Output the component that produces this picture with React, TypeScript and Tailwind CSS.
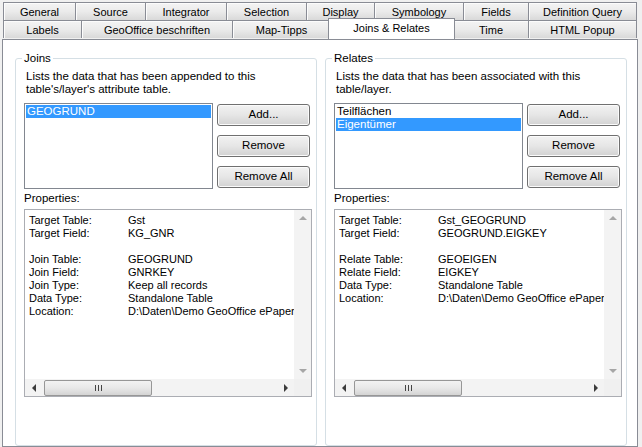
import React from "react";

const rowOne = [
  { label: "General", w: "w-[72px]" },
  { label: "Source", w: "w-[70px]" },
  { label: "Integrator", w: "w-[81px]" },
  { label: "Selection", w: "w-[80px]" },
  { label: "Display", w: "w-[68px]" },
  { label: "Symbology", w: "w-[89px]" },
  { label: "Fields", w: "w-[65px]" },
  { label: "Definition Query", w: "w-[109px]" },
];

const rowTwo = [
  { label: "Labels", w: "w-[78px]" },
  { label: "GeoOffice beschriften", w: "w-[151px]" },
  { label: "Map-Tipps", w: "w-[98px]" },
  { label: "Joins & Relates", w: "w-[127px]", active: true },
  { label: "Time", w: "w-[75px]" },
  { label: "HTML Popup", w: "w-[109px]" },
];

const ui = "font-['Liberation_Sans',Arial,sans-serif]";

function Tab({ label, w, active, last }: { label: string; w: string; active?: boolean; last?: boolean }) {
  if (active) {
    return (
      <div
        className={`${w} relative z-10 -mx-[2px] -mt-[2px] h-[21px] border-x border-t border-[#898c95] bg-white pt-[2px] text-center text-[11px] leading-[14px]`}
      >
        {label}
      </div>
    );
  }
  return (
    <div
      className={`${w} h-[18px] border-l border-t border-[#898c95] ${last ? "border-r" : ""} bg-linear-to-b from-[#f4f4f4] via-[#ebebeb] to-[#d9d9d9] pt-[2px] text-center text-[11px] leading-[14px] shadow-[inset_1px_1px_0_#fcfcfc]`}
    >
      {label}
    </div>
  );
}

function Button({ children }: { children: React.ReactNode }) {
  return (
    <div className="flex h-[22px] items-center justify-center rounded-[3px] border border-[#707070] bg-linear-to-b from-[#f2f2f2] via-[#e6e6e6] to-[#d2d2d2] text-[11.5px] shadow-[inset_0_0_0_1px_#fbfbfb]">
      {children}
    </div>
  );
}

function Arrow({ dir, dark }: { dir: "up" | "down" | "left" | "right"; dark?: boolean }) {
  const pts = {
    up: "0,4 4,0 8,4",
    down: "0,0 8,0 4,4",
    left: "4,0 4,8 0,4",
    right: "0,0 4,4 0,8",
  }[dir];
  const vertical = dir === "up" || dir === "down";
  return (
    <svg width={vertical ? 8 : 4} height={vertical ? 4 : 8} viewBox={vertical ? "0 0 8 4" : "0 0 4 8"}>
      <polygon points={pts} fill={dark ? "#3c3c3c" : "#a6a6a6"} />
    </svg>
  );
}

function Properties({ rows }: { rows: [string, string][] }) {
  return (
    <div className="flex h-[188px] w-[288px] flex-col border border-[#abadb3] bg-white">
      <div className="flex flex-1 overflow-hidden">
        <div className="flex-1 overflow-hidden whitespace-nowrap pl-[4px] pt-[4px] text-[11px] leading-[13px]">
          {rows.map(([k, v], i) => (
            <div key={i} className="flex h-[13px]">
              <span className="w-[99px] shrink-0">{k}</span>
              <span>{v}</span>
            </div>
          ))}
        </div>
        <div className="flex w-[17px] flex-col items-center justify-between bg-[#f3f3f3] py-[6px]">
          <Arrow dir="up" />
          <Arrow dir="down" />
        </div>
      </div>
      <div className="flex h-[17px]">
        <div className="flex flex-1 items-center bg-[#f3f3f3]">
          <div className="flex w-[17px] justify-center">
            <Arrow dir="left" dark />
          </div>
          <div className="ml-[2px] flex h-[16px] w-[108px] items-center justify-center gap-[2px] rounded-[2px] border border-[#979797] bg-linear-to-b from-[#f3f3f3] via-[#e8e8e8] to-[#d4d4d4]">
            <span className="h-[6px] w-px bg-[#444]" />
            <span className="h-[6px] w-px bg-[#444]" />
            <span className="h-[6px] w-px bg-[#444]" />
          </div>
          <div className="flex-1" />
          <div className="flex w-[17px] justify-center">
            <Arrow dir="right" dark />
          </div>
        </div>
        <div className="w-[17px] bg-[#f0f0f0]" />
      </div>
    </div>
  );
}

function Group({
  title,
  desc,
  items,
  selected,
  rows,
}: {
  title: string;
  desc: string[];
  items: string[];
  selected: number;
  rows: [string, string][];
}) {
  return (
    <div className="relative mt-[18px] w-[302px] rounded-[3px] border border-[#d5dfe5] pb-[9px] pl-[8px] pr-[4px] pt-[11px]">
      <span className="absolute -top-[8px] left-[6px] bg-white px-[2px] text-[11.5px] leading-[14px]">{title}</span>
      <div className="pl-[2px] text-[11.5px] leading-[13px]">
        {desc.map((d) => (
          <div key={d}>{d}</div>
        ))}
      </div>
      <div className="mt-[7px] flex h-[86px] gap-[4px]">
        <div className="w-[189px] border border-[#828790] bg-white p-[1px] text-[11.5px] leading-[13px]">
          {items.map((it, i) => (
            <div key={it} className={`h-[13px] pl-[1px] ${i === selected ? "bg-[#3399ff] text-white" : ""}`}>
              {it}
            </div>
          ))}
        </div>
        <div className="flex w-[93px] flex-col gap-[9px] pt-[1px]">
          <Button>Add...</Button>
          <Button>Remove</Button>
          <Button>Remove All</Button>
        </div>
      </div>
      <div className="mt-[2px] h-[14px] text-[11.5px] leading-[14px]">Properties:</div>
      <div className="mt-[4px]">
        <Properties rows={rows} />
      </div>
    </div>
  );
}

export default function App() {
  return (
    <div className={`${ui} h-[447px] w-[642px] overflow-hidden bg-[#f0f0f0] pt-[2px] text-black`}>
      <div className="relative z-10 ml-[3px] flex">
        {rowOne.map((t, i) => (
          <Tab key={t.label} label={t.label} w={t.w} last={i === rowOne.length - 1} />
        ))}
      </div>
      <div className="relative z-10 ml-[3px] flex">
        {rowTwo.map((t, i) => (
          <Tab key={t.label} label={t.label} w={t.w} active={t.active} last={i === rowTwo.length - 1} />
        ))}
      </div>
      <div className="ml-[2px] flex h-[408px] w-[636px] gap-[8px] border border-[#898c95] bg-white pl-[12px]">
        <Group
          title="Joins"
          desc={["Lists the data that has been appended to this", "table's/layer's attribute table."]}
          items={["GEOGRUND"]}
          selected={0}
          rows={[
            ["Target Table:", "Gst"],
            ["Target Field:", "KG_GNR"],
            ["", ""],
            ["Join Table:", "GEOGRUND"],
            ["Join Field:", "GNRKEY"],
            ["Join Type:", "Keep all records"],
            ["Data Type:", "Standalone Table"],
            ["Location:", "D:\\Daten\\Demo GeoOffice ePaper"],
          ]}
        />
        <Group
          title="Relates"
          desc={["Lists the data that has been associated with this", "table/layer."]}
          items={["Teilflächen", "Eigentümer"]}
          selected={1}
          rows={[
            ["Target Table:", "Gst_GEOGRUND"],
            ["Target Field:", "GEOGRUND.EIGKEY"],
            ["", ""],
            ["Relate Table:", "GEOEIGEN"],
            ["Relate Field:", "EIGKEY"],
            ["Data Type:", "Standalone Table"],
            ["Location:", "D:\\Daten\\Demo GeoOffice ePaper"],
          ]}
        />
      </div>
    </div>
  );
}
